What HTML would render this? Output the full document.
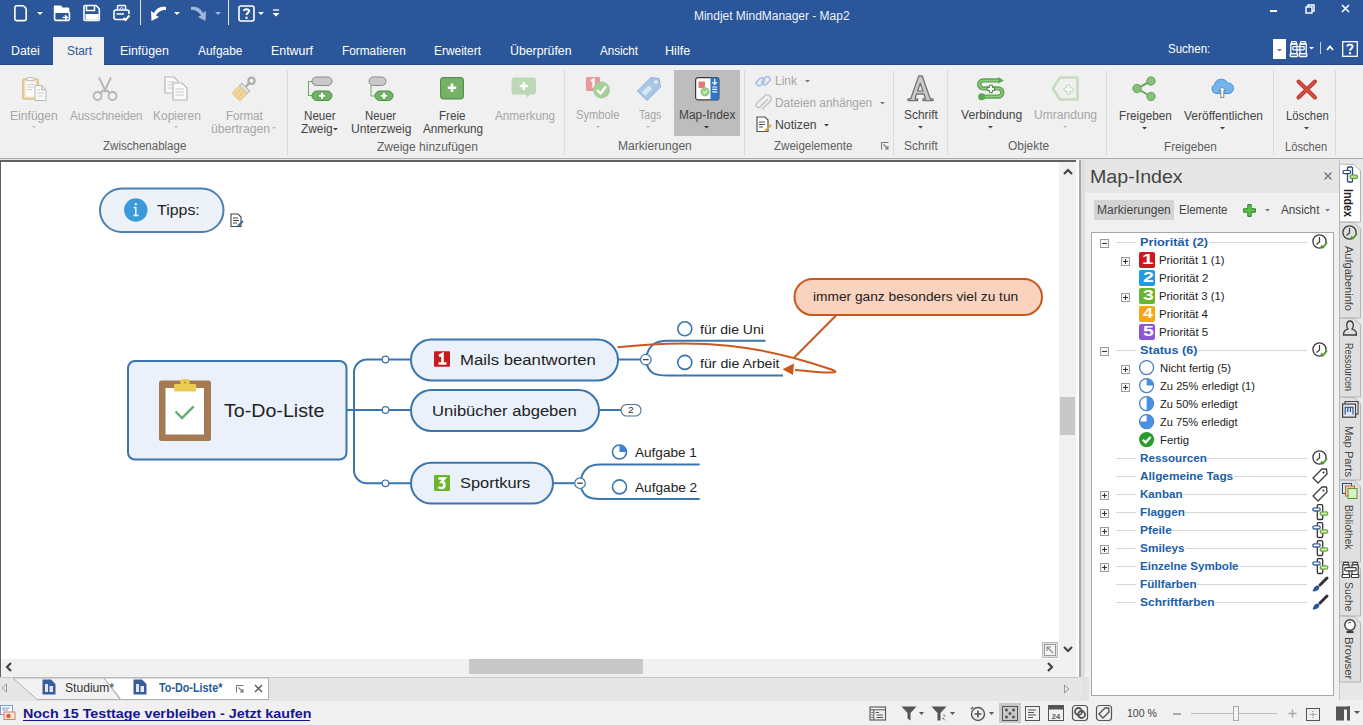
<!DOCTYPE html><html><head><meta charset="utf-8"><style>
html,body{margin:0;padding:0;width:1363px;height:725px;overflow:hidden;background:#f0f0f0;}
body{position:relative;font-family:"Liberation Sans",sans-serif;}
.t{position:absolute;white-space:nowrap;line-height:1;transform-origin:0 0;}
svg{overflow:visible}
</style></head><body>
<div style="position:absolute;left:0px;top:0px;width:1363px;height:65px;background:#2b579a"></div>
<svg style="position:absolute;left:14px;top:5px;" width="14" height="17" viewBox="0 0 14 17"><path d="M2.5 0.8 H8.5 C10 0.8 12.2 3 12.2 4.6 V14 A1.6 1.6 0 0 1 10.6 15.6 H2.5 A1.6 1.6 0 0 1 0.9 14 V2.4 A1.6 1.6 0 0 1 2.5 0.8 Z" fill="none" stroke="#fff" stroke-width="1.6"/></svg>
<svg style="position:absolute;left:36.5px;top:11.5px;" width="6" height="3" viewBox="0 0 6 3"><path d="M0 0 H6 L3 3 Z" fill="#fff"/></svg>
<svg style="position:absolute;left:53px;top:4px;" width="18" height="18" viewBox="0 0 18 18"><path d="M1.7 1.5 H8 L9.5 3.5 H15 A1.3 1.3 0 0 1 16.3 4.8 V9 H0.8 V2.5 A1 1 0 0 1 1.7 1.5 Z" fill="#fff"/><rect x="1.6" y="8" width="14.8" height="8.4" rx="1.3" fill="none" stroke="#fff" stroke-width="1.6"/><path d="M9.5 13.4 H14 M12 11.3 L14.2 13.4 L12 15.5" stroke="#fff" stroke-width="1.4" fill="none"/></svg>
<svg style="position:absolute;left:83px;top:4px;" width="18" height="18" viewBox="0 0 18 18"><path d="M2 1.5 H13 L16.3 4.8 V15.5 A1 1 0 0 1 15.3 16.5 H2 A1 1 0 0 1 1 15.5 V2.5 A1 1 0 0 1 2 1.5 Z" fill="none" stroke="#fff" stroke-width="1.6"/><path d="M3.5 1.5 V6.5 H11.5 V1.5" fill="none" stroke="#fff" stroke-width="1.5"/><rect x="2.5" y="10" width="13" height="5.8" fill="#fff"/></svg>
<svg style="position:absolute;left:113px;top:4px;" width="18" height="18" viewBox="0 0 18 18"><path d="M4.5 6 V2.6 A1.1 1.1 0 0 1 5.6 1.5 H11.4 A1.1 1.1 0 0 1 12.5 2.6 V6" fill="none" stroke="#fff" stroke-width="1.5"/><path d="M6.5 5 L8.5 3.5 L10.5 5" stroke="#fff" stroke-width="1" fill="none"/><path d="M13 15.5 H3 A2 2 0 0 1 1 13.5 V8 A2 2 0 0 1 3 6 H14 A2 2 0 0 1 16 8 V10" fill="none" stroke="#fff" stroke-width="1.6"/><path d="M3.5 10 H11" stroke="#fff" stroke-width="1.5"/><path d="M10.5 14 L12.5 16 L16.5 11.5" stroke="#fff" stroke-width="1.9" fill="none"/></svg>
<div style="position:absolute;left:140px;top:0px;width:1px;height:25px;background:#dfe6f1"></div>
<svg style="position:absolute;left:150px;top:5px;" width="17" height="17" viewBox="0 0 17 17"><path d="M16 2 C10 1 6 4 4 8 L1 6 L1.5 16 L9 12 L6 10.5 C8 7 11 5 16 5 Z" fill="#fff"/></svg>
<svg style="position:absolute;left:173.5px;top:11.5px;" width="6" height="3" viewBox="0 0 6 3"><path d="M0 0 H6 L3 3 Z" fill="#fff"/></svg>
<svg style="position:absolute;left:190px;top:5px;" width="17" height="17" viewBox="0 0 17 17"><path d="M1 2 C7 1 11 4 13 8 L16 6 L15.5 16 L8 12 L11 10.5 C9 7 6 5 1 5 Z" fill="#9fb5d9"/></svg>
<svg style="position:absolute;left:214.5px;top:11.5px;" width="6" height="3" viewBox="0 0 6 3"><path d="M0 0 H6 L3 3 Z" fill="#9fb5d9"/></svg>
<div style="position:absolute;left:228px;top:0px;width:1px;height:25px;background:#dfe6f1"></div>
<svg style="position:absolute;left:238px;top:5px;" width="17" height="17" viewBox="0 0 17 17"><rect x="1" y="1" width="15" height="15" rx="2" fill="none" stroke="#fff" stroke-width="1.6"/><path d="M6 6 C6 3.5 11 3.5 11 6 C11 8 8.5 8 8.5 10" fill="none" stroke="#fff" stroke-width="2"/><rect x="7.4" y="11.8" width="2.2" height="2" fill="#fff"/></svg>
<svg style="position:absolute;left:257.5px;top:11.5px;" width="6" height="3" viewBox="0 0 6 3"><path d="M0 0 H6 L3 3 Z" fill="#fff"/></svg>
<svg style="position:absolute;left:272px;top:9px;" width="8" height="8" viewBox="0 0 8 8"><path d="M1 1 H7" stroke="#fff" stroke-width="1.3"/><path d="M0.5 4 H7.5 L4 7.5 Z" fill="#fff"/></svg>
<div class="t" style="left:694.39px;top:9.80px;font-size:12px;color:#eef2f9;font-weight:normal;transform:scaleX(0.9966);">Mindjet MindManager - Map2</div>
<div style="position:absolute;left:1270px;top:10px;width:7px;height:2px;background:#fff"></div>
<svg style="position:absolute;left:1305px;top:4px;" width="10" height="10" viewBox="0 0 10 10"><rect x="1" y="3" width="6" height="6" fill="none" stroke="#fff" stroke-width="1.4"/><path d="M3 3 V1 H9 V7 H7" fill="none" stroke="#fff" stroke-width="1.4"/></svg>
<svg style="position:absolute;left:1341px;top:4px;" width="9" height="9" viewBox="0 0 9 9"><path d="M1 1 L8 8 M8 1 L1 8" stroke="#fff" stroke-width="1.6"/></svg>
<div style="position:absolute;left:53px;top:37px;width:51px;height:28px;background:#f0f0f0"></div>
<div class="t" style="left:10.86px;top:44.88px;font-size:12.5px;color:#ffffff;font-weight:normal;transform:scaleX(0.9872);">Datei</div>
<div class="t" style="left:67.40px;top:44.88px;font-size:12.5px;color:#2b579a;font-weight:normal;transform:scaleX(0.9515);">Start</div>
<div class="t" style="left:120.36px;top:44.88px;font-size:12.5px;color:#ffffff;font-weight:normal;transform:scaleX(0.9890);">Einfügen</div>
<div class="t" style="left:198.19px;top:44.88px;font-size:12.5px;color:#ffffff;font-weight:normal;transform:scaleX(0.9553);">Aufgabe</div>
<div class="t" style="left:270.85px;top:44.88px;font-size:12.5px;color:#ffffff;font-weight:normal;transform:scaleX(0.9899);">Entwurf</div>
<div class="t" style="left:341.91px;top:44.88px;font-size:12.5px;color:#ffffff;font-weight:normal;transform:scaleX(0.9463);">Formatieren</div>
<div class="t" style="left:434.40px;top:44.88px;font-size:12.5px;color:#ffffff;font-weight:normal;transform:scaleX(0.9531);">Erweitert</div>
<div class="t" style="left:510.33px;top:44.88px;font-size:12.5px;color:#ffffff;font-weight:normal;transform:scaleX(0.9836);">Überprüfen</div>
<div class="t" style="left:600.20px;top:44.88px;font-size:12.5px;color:#ffffff;font-weight:normal;transform:scaleX(0.9272);">Ansicht</div>
<div class="t" style="left:665.33px;top:44.88px;font-size:12.5px;color:#ffffff;font-weight:normal;transform:scaleX(1.0092);">Hilfe</div>
<div class="t" style="left:1168.39px;top:43.30px;font-size:12px;color:#ffffff;font-weight:normal;transform:scaleX(0.9605);">Suchen:</div>
<div style="position:absolute;left:1273px;top:39px;width:13px;height:20px;background:#fff"></div>
<svg style="position:absolute;left:1277.0px;top:48.5px;" width="5.0" height="2.5" viewBox="0 0 5.0 2.5"><path d="M0 0 H5.0 L2.5 2.5 Z" fill="#777"/></svg>
<svg style="position:absolute;left:1289px;top:40px;" width="19" height="18" viewBox="0 0 19 18"><g fill="none" stroke="#fff" stroke-width="1.3"><rect x="2.5" y="1.6" width="4.8" height="2.4" rx="0.8"/><rect x="1.8" y="4" width="6.2" height="9.6"/><rect x="1.2" y="13.6" width="7.4" height="2.9" rx="0.8"/><rect x="11.7" y="1.6" width="4.8" height="2.4" rx="0.8"/><rect x="11" y="4" width="6.2" height="9.6"/><rect x="10.4" y="13.6" width="7.4" height="2.9" rx="0.8"/><rect x="3.8" y="6.6" width="11.4" height="3.2" rx="0.8"/></g></svg>
<svg style="position:absolute;left:1309.0px;top:47px;" width="5.0" height="2.5" viewBox="0 0 5.0 2.5"><path d="M0 0 H5.0 L2.5 2.5 Z" fill="#fff"/></svg>
<div style="position:absolute;left:1320px;top:42px;width:1px;height:12px;background:#c8d4e8"></div>
<svg style="position:absolute;left:1326px;top:45px;" width="8" height="6" viewBox="0 0 8 6"><path d="M1 5 L4 1.5 L7 5" fill="none" stroke="#fff" stroke-width="1.8"/></svg>
<svg style="position:absolute;left:1342px;top:41px;" width="16" height="16" viewBox="0 0 16 16"><rect x="0.7" y="0.7" width="14.6" height="14.6" fill="none" stroke="#fff" stroke-width="1.3"/><path d="M5.2 5.5 C5.2 3 10.6 3 10.6 5.5 C10.6 7.5 8 7.5 8 9.8" fill="none" stroke="#fff" stroke-width="1.9"/><rect x="6.9" y="11.2" width="2.2" height="2" fill="#fff"/></svg>
<div style="position:absolute;left:0px;top:65px;width:1363px;height:93px;background:#f0f0f0"></div>
<div style="position:absolute;left:0px;top:64px;width:53px;height:1px;background:#24497f"></div>
<div style="position:absolute;left:104px;top:64px;width:1259px;height:1px;background:#24497f"></div>
<div style="position:absolute;left:0px;top:65px;width:53px;height:3px;background:#edf1f7"></div>
<div style="position:absolute;left:104px;top:65px;width:1259px;height:3px;background:#edf1f7"></div>
<div style="position:absolute;left:0px;top:158px;width:1363px;height:1px;background:#ababab"></div>
<div style="position:absolute;left:0px;top:159px;width:1363px;height:1px;background:#e6e6e6"></div>
<div style="position:absolute;left:287px;top:70px;width:1px;height:85px;background:#dcdcdc"></div>
<div style="position:absolute;left:564px;top:70px;width:1px;height:85px;background:#dcdcdc"></div>
<div style="position:absolute;left:744px;top:70px;width:1px;height:85px;background:#dcdcdc"></div>
<div style="position:absolute;left:893px;top:70px;width:1px;height:85px;background:#dcdcdc"></div>
<div style="position:absolute;left:947px;top:70px;width:1px;height:85px;background:#dcdcdc"></div>
<div style="position:absolute;left:1106px;top:70px;width:1px;height:85px;background:#dcdcdc"></div>
<div style="position:absolute;left:1273px;top:70px;width:1px;height:85px;background:#dcdcdc"></div>
<div style="position:absolute;left:1335px;top:70px;width:1px;height:85px;background:#dcdcdc"></div>
<svg style="position:absolute;left:22px;top:77px;" width="25" height="24" viewBox="0 0 25 24"><rect x="1" y="2" width="15" height="20" rx="1.8" fill="#efdcb4" stroke="#dcc08f" stroke-width="1.6"/><rect x="3.3" y="4.3" width="10.4" height="15.5" fill="#fbfbfb"/><rect x="5" y="0.5" width="7" height="3.2" rx="1" fill="#f4f4f4" stroke="#bdbdbd" stroke-width="1"/><path d="M5 7.5 H12 M5 10 H12 M5 12.5 H10" stroke="#c8c8c8" stroke-width="0.9"/><path d="M13 8.5 H20 L24 12.5 V23.5 H13 Z" fill="#fbfbfb" stroke="#b8b8b8" stroke-width="1"/><path d="M19.5 8.5 V13 H24" fill="#d8d8d8" stroke="#b8b8b8" stroke-width="0.8"/><path d="M15 13 H18 M15 16 H22 M16 19 H21" stroke="#c4c4c4" stroke-width="0.9"/></svg>
<div class="t" style="left:10.37px;top:109.50px;font-size:12px;color:#a6a6a6;font-weight:normal;transform:scaleX(1.0098);">Einfügen</div>
<svg style="position:absolute;left:31.5px;top:125.5px;" width="4" height="2" viewBox="0 0 4 2"><path d="M0 0 H4 L2 2 Z" fill="#b8b8b8"/></svg>
<svg style="position:absolute;left:92px;top:77px;" width="26" height="24" viewBox="0 0 26 24"><path d="M7 0.5 L14 15 M19 0.5 L12 15" stroke="#b4b4b4" stroke-width="1.8" fill="none"/><circle cx="5.5" cy="19" r="4" fill="none" stroke="#b4b4b4" stroke-width="1.8"/><circle cx="20.5" cy="19" r="4" fill="none" stroke="#b4b4b4" stroke-width="1.8"/><path d="M8.5 16 L11.5 13 M17.5 16 L14.5 13" stroke="#b4b4b4" stroke-width="1.8"/></svg>
<div class="t" style="left:69.69px;top:109.50px;font-size:12px;color:#a6a6a6;font-weight:normal;transform:scaleX(0.9617);">Ausschneiden</div>
<svg style="position:absolute;left:164px;top:76px;" width="25" height="25" viewBox="0 0 25 25"><path d="M1 1 H10 L14 5 V17 H1 Z" fill="#fafafa" stroke="#b8b8b8" stroke-width="1.2"/><path d="M3.5 6 H11 M3.5 9 H11 M3.5 12 H11" stroke="#c4c4c4" stroke-width="0.9"/><path d="M9 7 H18 L23 12 V24 H9 Z" fill="#fafafa" stroke="#b8b8b8" stroke-width="1.2"/><path d="M11.5 13 H20 M11.5 16 H20 M11.5 19 H20" stroke="#c4c4c4" stroke-width="0.9"/></svg>
<div class="t" style="left:152.85px;top:109.50px;font-size:12px;color:#a6a6a6;font-weight:normal;transform:scaleX(0.9973);">Kopieren</div>
<svg style="position:absolute;left:173.5px;top:125.5px;" width="4" height="2" viewBox="0 0 4 2"><path d="M0 0 H4 L2 2 Z" fill="#b8b8b8"/></svg>
<svg style="position:absolute;left:230px;top:75px;" width="27" height="27" viewBox="0 0 27 27"><circle cx="21.5" cy="5.8" r="3.2" fill="none" stroke="#ababab" stroke-width="2.2"/><path d="M19.2 8.2 L15.5 12" stroke="#ababab" stroke-width="2.4"/><g transform="rotate(45 10.5 17.5)"><rect x="5" y="10" width="11" height="3.5" fill="#e6e6e6" stroke="#b4b4b4" stroke-width="1"/><rect x="5" y="13.5" width="11" height="10.5" rx="1.5" fill="#f2d6a2" stroke="#e3c68e" stroke-width="1"/><path d="M8.5 15 V23 M12.5 15 V23" stroke="#e6bf7a" stroke-width="1"/></g></svg>
<div class="t" style="left:226.42px;top:109.50px;font-size:12px;color:#a6a6a6;font-weight:normal;transform:scaleX(0.9667);">Format</div>
<div class="t" style="left:210.72px;top:122.70px;font-size:12px;color:#a6a6a6;font-weight:normal;transform:scaleX(1.0176);">übertragen</div>
<svg style="position:absolute;left:272px;top:126.5px;" width="4" height="2" viewBox="0 0 4 2"><path d="M0 0 H4 L2 2 Z" fill="#b8b8b8"/></svg>
<div class="t" style="left:102.60px;top:140.30px;font-size:12px;color:#5e5e5e;font-weight:normal;transform:scaleX(0.9612);">Zwischenablage</div>
<svg style="position:absolute;left:306px;top:76px;" width="28" height="26" viewBox="0 0 28 26"><rect x="6" y="1" width="20" height="8.5" rx="4.25" fill="#c9c9c9" stroke="#8a8a8a" stroke-width="1"/><path d="M6 5.5 H2.5 V19.5 H6" fill="none" stroke="#6faa64" stroke-width="1.1"/><rect x="6" y="15" width="20" height="9.5" rx="4.75" fill="#70b366" stroke="#4e8d45" stroke-width="1"/><path d="M14.6 16.2 H17.4 V18.4 H19.6 V21.1 H17.4 V23.3 H14.6 V21.1 H12.4 V18.4 H14.6 Z" fill="#fff" stroke="#4e8d45" stroke-width="0.6"/></svg>
<div class="t" style="left:304.42px;top:109.80px;font-size:12px;color:#444444;font-weight:normal;transform:scaleX(0.9687);">Neuer</div>
<div class="t" style="left:300.59px;top:122.80px;font-size:12px;color:#444444;font-weight:normal;transform:scaleX(0.9890);">Zweig</div>
<svg style="position:absolute;left:333.0px;top:127.5px;" width="5.0" height="2.5" viewBox="0 0 5.0 2.5"><path d="M0 0 H5.0 L2.5 2.5 Z" fill="#444"/></svg>
<svg style="position:absolute;left:366px;top:76px;" width="28" height="26" viewBox="0 0 28 26"><rect x="3" y="1" width="17" height="8.5" rx="4.25" fill="#c9c9c9" stroke="#8a8a8a" stroke-width="1"/><path d="M5 9.5 V20 H9" fill="none" stroke="#6faa64" stroke-width="1"/><rect x="9" y="15" width="18" height="9.5" rx="4.75" fill="#70b366" stroke="#4e8d45" stroke-width="1"/><path d="M16.6 16.2 H19.4 V18.4 H21.6 V21.1 H19.4 V23.3 H16.6 V21.1 H14.4 V18.4 H16.6 Z" fill="#fff" stroke="#4e8d45" stroke-width="0.6"/></svg>
<div class="t" style="left:365.44px;top:109.80px;font-size:12px;color:#444444;font-weight:normal;transform:scaleX(0.9528);">Neuer</div>
<div class="t" style="left:351.29px;top:122.80px;font-size:12px;color:#444444;font-weight:normal;transform:scaleX(1.0076);">Unterzweig</div>
<svg style="position:absolute;left:440px;top:77px;" width="24" height="23" viewBox="0 0 24 23"><rect x="0.6" y="0.6" width="22.8" height="21.3" rx="3.2" fill="#74b268" stroke="#568f4c" stroke-width="1.2"/><path d="M12 6.5 V15 M7.75 10.75 H16.25" stroke="#fff" stroke-width="2.6"/></svg>
<div class="t" style="left:438.91px;top:109.80px;font-size:12px;color:#444444;font-weight:normal;transform:scaleX(0.9712);">Freie</div>
<div class="t" style="left:423.19px;top:122.80px;font-size:12px;color:#444444;font-weight:normal;transform:scaleX(0.9777);">Anmerkung</div>
<svg style="position:absolute;left:511px;top:77px;" width="26" height="23" viewBox="0 0 26 23"><path d="M3 0.5 H22 A3 3 0 0 1 25 3.5 V14.5 A3 3 0 0 1 22 17.5 H19 L16.5 20.5 L15 17.5 H3 A3 3 0 0 1 0.5 14.5 V3.5 A3 3 0 0 1 3 0.5 Z" fill="#bcd8b6"/><path d="M12.75 5 V13 M8.75 9 H16.75" stroke="#fff" stroke-width="2.4"/></svg>
<div class="t" style="left:495.19px;top:109.80px;font-size:12px;color:#a6a6a6;font-weight:normal;transform:scaleX(0.9777);">Anmerkung</div>
<div class="t" style="left:376.58px;top:140.50px;font-size:12px;color:#5e5e5e;font-weight:normal;transform:scaleX(1.0015);">Zweige hinzufügen</div>
<div style="position:absolute;left:674px;top:70px;width:66px;height:66px;background:#bdbdbd"></div>
<svg style="position:absolute;left:585px;top:76px;" width="20" height="25" viewBox="0 0 20 25"><rect x="1" y="1" width="14" height="14" fill="#e69a9a"/><path d="M6 5 L8.5 3.5 V12" stroke="#fff" stroke-width="2.2" fill="none"/><circle cx="16.5" cy="14" r="8.5" fill="#a6d09a"/><path d="M12 14 L15.5 17.5 L21 10.5" stroke="#fff" stroke-width="2.2" fill="none"/></svg>
<div class="t" style="left:576.42px;top:109.40px;font-size:12px;color:#a6a6a6;font-weight:normal;transform:scaleX(0.9315);">Symbole</div>
<svg style="position:absolute;left:595.5px;top:125.5px;" width="4" height="2" viewBox="0 0 4 2"><path d="M0 0 H4 L2 2 Z" fill="#b8b8b8"/></svg>
<svg style="position:absolute;left:636px;top:77px;" width="26" height="25" viewBox="0 0 26 25"><path d="M23 1.5 L24.5 10 L11 23.5 L1.5 14 L15 0.5 Z" fill="#a9c6e6" stroke="#8ab0dc" stroke-width="1"/><circle cx="20" cy="5" r="1.8" fill="#f0f0f0"/><rect x="6" y="11" width="10" height="5" transform="rotate(-45 11 13.5)" fill="#d9e6f4"/></svg>
<div class="t" style="left:639.21px;top:109.40px;font-size:12px;color:#a6a6a6;font-weight:normal;transform:scaleX(0.8809);">Tags</div>
<svg style="position:absolute;left:646px;top:125.5px;" width="4" height="2" viewBox="0 0 4 2"><path d="M0 0 H4 L2 2 Z" fill="#b8b8b8"/></svg>
<svg style="position:absolute;left:695px;top:77px;" width="25" height="24" viewBox="0 0 25 24"><rect x="0.6" y="0.6" width="23.3" height="22.3" rx="2.5" fill="#fff" stroke="#3a3a3a" stroke-width="1.2"/><path d="M15.5 0.6 H21.4 A2.5 2.5 0 0 1 23.9 3.1 V20.4 A2.5 2.5 0 0 1 21.4 22.9 H15.5 Z" fill="#2f74c6"/><rect x="3.5" y="4.5" width="6.5" height="6.5" rx="0.6" fill="#e27a7a"/><circle cx="10" cy="14.8" r="4.6" fill="#96cc85"/><path d="M8 14.8 L9.6 16.4 L12.2 13.2" stroke="#e6f4e0" stroke-width="1.2" fill="none"/><path d="M19.7 2 V7.5 M17.4 5.2 L19.7 7.5 L22 5.2 M17.3 10 H22.1 M17.3 12.4 H22.1 M17.3 14.8 H22.1" stroke="#fff" stroke-width="1.2" fill="none"/></svg>
<div class="t" style="left:679.39px;top:109.40px;font-size:12px;color:#444444;font-weight:normal;transform:scaleX(0.9948);">Map-Index</div>
<svg style="position:absolute;left:704.0px;top:126px;" width="5.0" height="2.5" viewBox="0 0 5.0 2.5"><path d="M0 0 H5.0 L2.5 2.5 Z" fill="#333"/></svg>
<div class="t" style="left:618.38px;top:140.20px;font-size:12px;color:#5e5e5e;font-weight:normal;transform:scaleX(1.0062);">Markierungen</div>
<svg style="position:absolute;left:755px;top:74px;" width="17" height="15" viewBox="0 0 17 15"><rect x="1" y="5" width="9" height="5.5" rx="2.75" transform="rotate(-45 5.5 7.75)" fill="none" stroke="#a8c4e6" stroke-width="1.8"/><rect x="6.5" y="4" width="9" height="5.5" rx="2.75" transform="rotate(-45 11 6.75)" fill="none" stroke="#a8c4e6" stroke-width="1.8"/></svg>
<div class="t" style="left:774.89px;top:75.10px;font-size:12px;color:#a6a6a6;font-weight:normal;transform:scaleX(0.9969);">Link</div>
<svg style="position:absolute;left:805.0px;top:79.5px;" width="5.0" height="2.5" viewBox="0 0 5.0 2.5"><path d="M0 0 H5.0 L2.5 2.5 Z" fill="#777"/></svg>
<svg style="position:absolute;left:755px;top:95px;" width="17" height="16" viewBox="0 0 17 16"><path d="M13 4 L5 12 A2.5 2.5 0 0 1 1.5 8.5 L10 0.5 A4 4 0 0 1 15.5 6 L7 14.5" fill="none" stroke="#c6c6c6" stroke-width="1.6"/></svg>
<div class="t" style="left:774.89px;top:97.00px;font-size:12px;color:#a6a6a6;font-weight:normal;transform:scaleX(0.9911);">Dateien anhängen</div>
<svg style="position:absolute;left:879.5px;top:101.5px;" width="5.0" height="2.5" viewBox="0 0 5.0 2.5"><path d="M0 0 H5.0 L2.5 2.5 Z" fill="#777"/></svg>
<svg style="position:absolute;left:756px;top:116px;" width="17" height="17" viewBox="0 0 17 17"><path d="M1 1 H9 L12 4 V15.5 H1 Z" fill="#fff" stroke="#555" stroke-width="1.2"/><path d="M3 6 H9 M3 8.5 H9 M3 11 H7" stroke="#555" stroke-width="1"/><path d="M9 15 L15 9" stroke="#e0a030" stroke-width="2"/></svg>
<div class="t" style="left:774.86px;top:118.90px;font-size:12px;color:#444444;font-weight:normal;transform:scaleX(1.0221);">Notizen</div>
<svg style="position:absolute;left:823.5px;top:123.5px;" width="5.0" height="2.5" viewBox="0 0 5.0 2.5"><path d="M0 0 H5.0 L2.5 2.5 Z" fill="#444"/></svg>
<div class="t" style="left:773.60px;top:140.10px;font-size:12px;color:#5e5e5e;font-weight:normal;transform:scaleX(0.9634);">Zweigelemente</div>
<svg style="position:absolute;left:881px;top:142px;" width="8" height="8" viewBox="0 0 8 8"><path d="M0.5 0.5 H7.5 M0.5 0.5 V7.5" stroke="#777" stroke-width="1"/><path d="M2.5 2.5 L7 7 M4 7 H7 V4" stroke="#777" stroke-width="1.1" fill="none"/></svg>
<svg style="position:absolute;left:907px;top:75px;" width="27" height="27" viewBox="0 0 27 27"><path d="M11.8 1 H15.2 L23.3 24 H26 V25.6 H16 V24 H18.6 L16.9 19 H9.6 L7.9 24 H10.6 V25.6 H1 V24 H3.6 Z M10.6 16.2 H15.9 L13.3 8.2 Z" fill="#cacaca" fill-rule="evenodd" stroke="#757575" stroke-width="1.3" stroke-linejoin="round"/></svg>
<div class="t" style="left:904.35px;top:109.40px;font-size:12px;color:#444444;font-weight:normal;transform:scaleX(0.9945);">Schrift</div>
<svg style="position:absolute;left:918.0px;top:126px;" width="5.0" height="2.5" viewBox="0 0 5.0 2.5"><path d="M0 0 H5.0 L2.5 2.5 Z" fill="#444"/></svg>
<div class="t" style="left:904.35px;top:140.10px;font-size:12px;color:#5e5e5e;font-weight:normal;transform:scaleX(0.9945);">Schrift</div>
<svg style="position:absolute;left:976px;top:75px;" width="30" height="27" viewBox="0 0 30 27"><path d="M23 5.4 H7.2 A4 4 0 0 0 7.2 13.4 H22.2 A4.1 4.1 0 0 1 22.2 21.6 H5.6" fill="none" stroke="#5fa554" stroke-width="4.4"/><path d="M23 5.4 H7.2 A4 4 0 0 0 7.2 13.4 H22.2 A4.1 4.1 0 0 1 22.2 21.6 H5.6" fill="none" stroke="#93ca86" stroke-width="1.5"/><path d="M22.3 2 L27.9 5.4 L22.3 8.8 Z" fill="#5fa554"/><circle cx="5.6" cy="21.7" r="3.5" fill="#5fa554"/><path d="M13.4 10.2 H16.4 V12.6 H18.6 V15.4 H16.4 V17.6 H13.4 V15.4 H11.1 V12.6 H13.4 Z" fill="#fbfff8" stroke="#4d7a45" stroke-width="1"/></svg>
<div class="t" style="left:961.17px;top:109.40px;font-size:12px;color:#444444;font-weight:normal;transform:scaleX(1.0082);">Verbindung</div>
<svg style="position:absolute;left:988.0px;top:126px;" width="5.0" height="2.5" viewBox="0 0 5.0 2.5"><path d="M0 0 H5.0 L2.5 2.5 Z" fill="#444"/></svg>
<svg style="position:absolute;left:1051px;top:76px;" width="29" height="25" viewBox="0 0 29 25"><path d="M9 1.5 H26.5 V23.5 H9 L1.8 12.5 Z" fill="none" stroke="#c5ddbd" stroke-width="2.6" stroke-linejoin="round"/><path d="M16 9 H19 V12 H22 V15 H19 V18 H16 V15 H13 V12 H16 Z" fill="#fff" stroke="#bdd6b4" stroke-width="1"/></svg>
<div class="t" style="left:1034.30px;top:109.40px;font-size:12px;color:#a6a6a6;font-weight:normal;transform:scaleX(1.0059);">Umrandung</div>
<svg style="position:absolute;left:1062.5px;top:126px;" width="4" height="2" viewBox="0 0 4 2"><path d="M0 0 H4 L2 2 Z" fill="#b8b8b8"/></svg>
<div class="t" style="left:1007.90px;top:140.10px;font-size:12px;color:#5e5e5e;font-weight:normal;transform:scaleX(0.9938);">Objekte</div>
<svg style="position:absolute;left:1132px;top:76px;" width="25" height="26" viewBox="0 0 25 26"><path d="M19 5 L5 12.5 L19 20.5" fill="none" stroke="#6aa35f" stroke-width="2"/><circle cx="19" cy="5" r="4.2" fill="#86c07a" stroke="#6aa35f" stroke-width="1"/><circle cx="5" cy="12.5" r="4.2" fill="#86c07a" stroke="#6aa35f" stroke-width="1"/><circle cx="19" cy="20.5" r="4.2" fill="#86c07a" stroke="#6aa35f" stroke-width="1"/></svg>
<div class="t" style="left:1119.41px;top:110.00px;font-size:12px;color:#444444;font-weight:normal;transform:scaleX(0.9778);">Freigeben</div>
<svg style="position:absolute;left:1142.0px;top:126.5px;" width="5.0" height="2.5" viewBox="0 0 5.0 2.5"><path d="M0 0 H5.0 L2.5 2.5 Z" fill="#444"/></svg>
<svg style="position:absolute;left:1211px;top:78px;" width="23" height="22" viewBox="0 0 23 22"><path d="M5 15.5 A4.8 4.8 0 0 1 3.5 6.5 A7 7 0 0 1 16.5 5 A5.3 5.3 0 0 1 18 15.5 Z" fill="#74b3ec" stroke="#4d8fd0" stroke-width="1"/><path d="M11.3 9 L7.8 12.5 H9.8 V19.5 H12.8 V12.5 H14.8 Z" fill="#fff" stroke="#5a6e80" stroke-width="0.8"/></svg>
<div class="t" style="left:1184.18px;top:110.00px;font-size:12px;color:#444444;font-weight:normal;transform:scaleX(0.9981);">Veröffentlichen</div>
<svg style="position:absolute;left:1220.0px;top:126.5px;" width="5.0" height="2.5" viewBox="0 0 5.0 2.5"><path d="M0 0 H5.0 L2.5 2.5 Z" fill="#444"/></svg>
<div class="t" style="left:1164.41px;top:140.80px;font-size:12px;color:#5e5e5e;font-weight:normal;transform:scaleX(0.9778);">Freigeben</div>
<svg style="position:absolute;left:1296px;top:79px;" width="22" height="21" viewBox="0 0 22 21"><path d="M2.5 2.5 L19 18.5 M19 2.5 L2.5 18.5" stroke="#b8352e" stroke-width="4" stroke-linecap="round"/><path d="M2.5 2.5 L19 18.5 M19 2.5 L2.5 18.5" stroke="#dc4a3c" stroke-width="2.4" stroke-linecap="round"/></svg>
<div class="t" style="left:1286.45px;top:110.00px;font-size:12px;color:#444444;font-weight:normal;transform:scaleX(0.9414);">Löschen</div>
<svg style="position:absolute;left:1304.0px;top:126.5px;" width="5.0" height="2.5" viewBox="0 0 5.0 2.5"><path d="M0 0 H5.0 L2.5 2.5 Z" fill="#444"/></svg>
<div class="t" style="left:1284.96px;top:140.80px;font-size:12px;color:#5e5e5e;font-weight:normal;transform:scaleX(0.9299);">Löschen</div>
<div style="position:absolute;left:0px;top:160px;width:1079px;height:517px;background:#fff"></div>
<div style="position:absolute;left:0px;top:160px;width:1077px;height:2px;background:#626262"></div>
<div style="position:absolute;left:0px;top:160px;width:1px;height:517px;background:#5e5e5e"></div>
<div style="position:absolute;left:1059px;top:162px;width:18px;height:497px;background:#f0f0f0"></div>
<svg style="position:absolute;left:1063px;top:168px;" width="10" height="7" viewBox="0 0 10 7"><path d="M1 6 L5 2 L9 6" fill="none" stroke="#444" stroke-width="2.2"/></svg>
<svg style="position:absolute;left:1063px;top:646px;" width="10" height="7" viewBox="0 0 10 7"><path d="M1 1 L5 5 L9 1" fill="none" stroke="#444" stroke-width="2.2"/></svg>
<div style="position:absolute;left:1060px;top:397px;width:15px;height:38px;background:#c8c8c8"></div>
<svg style="position:absolute;left:1042px;top:642px;" width="16" height="16" viewBox="0 0 16 16"><rect x="0.5" y="0.5" width="15" height="15" fill="#e4e4e4" stroke="#b8b8b8" stroke-width="1"/><rect x="2.5" y="2.5" width="11" height="11" fill="#f4f4f4" stroke="#9a9a9a" stroke-width="1"/><path d="M11 11 L5.5 5.5 M5 9 V5 H9" stroke="#8a8a8a" stroke-width="1.1" fill="none"/></svg>
<div style="position:absolute;left:1px;top:659px;width:1075px;height:18px;background:#f0f0f0"></div>
<svg style="position:absolute;left:5px;top:662px;" width="7" height="10" viewBox="0 0 7 10"><path d="M6 1 L2 5 L6 9" fill="none" stroke="#444" stroke-width="2.2"/></svg>
<svg style="position:absolute;left:1047px;top:662px;" width="7" height="10" viewBox="0 0 7 10"><path d="M1 1 L5 5 L1 9" fill="none" stroke="#444" stroke-width="2.2"/></svg>
<div style="position:absolute;left:469px;top:659px;width:174px;height:15px;background:#c8c8c8"></div>
<div style="position:absolute;left:1076px;top:160px;width:3px;height:517px;background:#fbfbfb"></div>
<div style="position:absolute;left:1079px;top:160px;width:2px;height:517px;background:#a8a8a8"></div>
<svg style="position:absolute;left:0;top:0" width="1363" height="725"><rect x="100" y="188.5" width="123.5" height="43.5" rx="21.75" fill="#edf2f8" stroke="#4b80b0" stroke-width="2"/><circle cx="135.8" cy="210" r="11.7" fill="#3d9ad9"/><path d="M135.8 207 V215.5 M133.5 215.5 H138.5 M133.6 207.5 H136" stroke="#fff" stroke-width="1.4" fill="none"/><rect x="134.9" y="203.2" width="1.9" height="1.9" fill="#fff"/><rect x="128" y="361" width="218.5" height="98.5" rx="7" fill="#eaf1fa" stroke="#3b75ae" stroke-width="2"/><rect x="159" y="380.5" width="52" height="60.5" rx="2.5" fill="#a47a53"/><rect x="165.5" y="388" width="38.5" height="46.5" fill="#fff"/><rect x="174" y="384" width="22.2" height="7.4" rx="1.2" fill="#eccb52"/><path d="M180.4 384.5 V381 A2 2 0 0 1 182.4 379 H187.5 A2 2 0 0 1 189.5 381 V384.5 Z" fill="#eccb52"/><circle cx="185" cy="382.5" r="0.9" fill="#a88a2a"/><path d="M175.5 411.5 L182 418 L193.7 406.3" fill="none" stroke="#67ad72" stroke-width="2.4"/><path d="M346.5 410 H410" stroke="#3b75ae" stroke-width="2" fill="none"/><path d="M410 359.5 H367 A13 13 0 0 0 354 372.5 V470.3 A13 13 0 0 0 367 483.3 H410" stroke="#3b75ae" stroke-width="2" fill="none"/><circle cx="385.5" cy="359.5" r="3.3" fill="#fff" stroke="#3b75ae" stroke-width="1.2"/><circle cx="385.5" cy="410" r="3.3" fill="#fff" stroke="#3b75ae" stroke-width="1.2"/><circle cx="385.5" cy="483.3" r="3.3" fill="#fff" stroke="#3b75ae" stroke-width="1.2"/><rect x="411" y="339.5" width="207" height="41" rx="20.5" fill="#eaf1fa" stroke="#3b75ae" stroke-width="2"/><rect x="411" y="390" width="188" height="41" rx="20.5" fill="#eaf1fa" stroke="#3b75ae" stroke-width="2"/><rect x="411" y="462.8" width="142" height="40.8" rx="20.4" fill="#eaf1fa" stroke="#3b75ae" stroke-width="2"/><rect x="434" y="351.3" width="16" height="15.5" rx="1" fill="#c81b1b"/><path d="M439 356 L442.5 354 V363.5 M438.5 363.5 H446.5" stroke="#fff" stroke-width="2.6" fill="none"/><rect x="434" y="475" width="16" height="16" rx="1" fill="#6fb52c"/><path d="M438.5 478.5 H444.5 L441.5 482 C445.5 482 445.5 488 441.5 488 C440 488 439 487.5 438.5 487" stroke="#fff" stroke-width="2.4" fill="none"/><path d="M618 359.5 H640" stroke="#3b75ae" stroke-width="2"/><path d="M645.8 359.5 C648 345 655 340.7 668 340.7 H765.5" stroke="#3b75ae" stroke-width="2" fill="none"/><path d="M645.8 359.5 C648 374 655 375.6 668 375.6 H783" stroke="#3b75ae" stroke-width="2" fill="none"/><circle cx="645.8" cy="359.6" r="5.3" fill="#fff" stroke="#3b75ae" stroke-width="1.2"/><path d="M643 359.6 H648.6" stroke="#444" stroke-width="1.3"/><circle cx="684.8" cy="328.8" r="7" fill="#fff" stroke="#3b75ae" stroke-width="1.6"/><circle cx="684.8" cy="362.4" r="7" fill="#fff" stroke="#3b75ae" stroke-width="1.6"/><path d="M599 410 H621" stroke="#3b75ae" stroke-width="2"/><rect x="621" y="404.5" width="20" height="11.5" rx="5.75" fill="#fff" stroke="#4f7293" stroke-width="1.1"/><path d="M553.5 483.2 H575" stroke="#3b75ae" stroke-width="2"/><path d="M580 483.2 C582 470 588 464.6 600 464.6 H699.7" stroke="#3b75ae" stroke-width="2" fill="none"/><path d="M580 483.2 C582 496 588 499 600 499 H699.7" stroke="#3b75ae" stroke-width="2" fill="none"/><circle cx="580" cy="483.2" r="5.3" fill="#fff" stroke="#3b75ae" stroke-width="1.2"/><path d="M577.2 483.2 H582.8" stroke="#444" stroke-width="1.3"/><circle cx="619.5" cy="452" r="7" fill="#fff" stroke="#3b75ae" stroke-width="1.6"/><path d="M619.5 452 V445 A7 7 0 0 1 626.5 452 Z" fill="#3d7fd9"/><circle cx="619.5" cy="486.9" r="7" fill="#fff" stroke="#3b75ae" stroke-width="1.6"/><path d="M836 315.5 L793.5 358.3" stroke="#c9581f" stroke-width="2"/><rect x="794.5" y="279" width="247.5" height="36" rx="18" fill="#f9d3be" stroke="#c9581f" stroke-width="2"/><path d="M617.5 347.3 C700 338 760 345 830 369 C842 373 835 374 795 370" stroke="#c9581f" stroke-width="2" fill="none"/><path d="M782.5 369.2 L794 363.5 L793 375 Z" fill="#c9581f"/></svg>
<svg style="position:absolute;left:230px;top:213px;" width="14" height="15" viewBox="0 0 14 15"><path d="M1 1 H8 L11 4 V13.5 H1 Z" fill="#fff" stroke="#444" stroke-width="1.1"/><path d="M3 5 H8 M3 7.5 H9 M3 10 H7" stroke="#444" stroke-width="1"/><path d="M8 13 L13 8" stroke="#3a6fb0" stroke-width="2"/></svg>
<div class="t" style="left:157.10px;top:202.32px;font-size:15.5px;color:#222222;font-weight:normal;transform:scaleX(1.0279);">Tipps:</div>
<div class="t" style="left:224.02px;top:400.85px;font-size:19px;color:#222222;font-weight:normal;transform:scaleX(1.0328);">To-Do-Liste</div>
<div class="t" style="left:460.27px;top:352.12px;font-size:15.5px;color:#222222;font-weight:normal;transform:scaleX(1.0794);">Mails beantworten</div>
<div class="t" style="left:431.62px;top:402.62px;font-size:15.5px;color:#222222;font-weight:normal;transform:scaleX(1.0701);">Unibücher abgeben</div>
<div class="t" style="left:459.92px;top:475.22px;font-size:15.5px;color:#222222;font-weight:normal;transform:scaleX(1.0592);">Sportkurs</div>
<div class="t" style="left:699.82px;top:324.38px;font-size:12.5px;color:#222222;font-weight:normal;transform:scaleX(1.1218);">für die Uni</div>
<div class="t" style="left:699.82px;top:358.18px;font-size:12.5px;color:#222222;font-weight:normal;transform:scaleX(1.1329);">für die Arbeit</div>
<div class="t" style="left:634.95px;top:447.38px;font-size:12.5px;color:#222222;font-weight:normal;transform:scaleX(1.0852);">Aufgabe 1</div>
<div class="t" style="left:634.94px;top:482.07px;font-size:12.5px;color:#222222;font-weight:normal;transform:scaleX(1.0909);">Aufgabe 2</div>
<div class="t" style="left:812.75px;top:289.75px;font-size:13px;color:#222222;font-weight:normal;transform:scaleX(1.0556);">immer ganz besonders viel zu tun</div>
<div class="t" style="left:628.37px;top:404.82px;font-size:9.5px;color:#333;font-weight:normal;transform:scaleX(1.0893);">2</div>
<div style="position:absolute;left:1081px;top:160px;width:258px;height:540px;background:#f0f0f0"></div>
<div style="position:absolute;left:1081px;top:160px;width:4px;height:540px;background:#dedede"></div>
<div style="position:absolute;left:1085px;top:160px;width:254px;height:33px;background:#e6e6e6"></div>
<div class="t" style="left:1090.37px;top:167.58px;font-size:18.5px;color:#444444;font-weight:normal;transform:scaleX(1.0603);">Map-Index</div>
<svg style="position:absolute;left:1323px;top:171px;" width="10" height="10" viewBox="0 0 10 10"><path d="M1.5 1.5 L8.5 8.5 M8.5 1.5 L1.5 8.5" stroke="#777" stroke-width="1.5"/></svg>
<div style="position:absolute;left:1094px;top:200px;width:80px;height:20px;background:#d4d4d4"></div>
<div class="t" style="left:1097.38px;top:203.60px;font-size:12px;color:#444;font-weight:normal;transform:scaleX(1.0062);">Markierungen</div>
<div class="t" style="left:1178.93px;top:203.60px;font-size:12px;color:#444;font-weight:normal;transform:scaleX(0.9567);">Elemente</div>
<svg style="position:absolute;left:1243px;top:204px;" width="14" height="13" viewBox="0 0 14 13"><path d="M4.8 0.6 H8.2 V4.8 H12.4 V8.2 H8.2 V12.4 H4.8 V8.2 H0.6 V4.8 H4.8 Z" fill="#5cc24a" stroke="#2f7d2a" stroke-width="1"/></svg>
<svg style="position:absolute;left:1264.5px;top:208.5px;" width="5.0" height="2.5" viewBox="0 0 5.0 2.5"><path d="M0 0 H5.0 L2.5 2.5 Z" fill="#777"/></svg>
<div class="t" style="left:1280.69px;top:203.60px;font-size:12px;color:#444;font-weight:normal;transform:scaleX(0.9754);">Ansicht</div>
<svg style="position:absolute;left:1324.5px;top:208.5px;" width="5.0" height="2.5" viewBox="0 0 5.0 2.5"><path d="M0 0 H5.0 L2.5 2.5 Z" fill="#777"/></svg>
<div style="position:absolute;left:1091px;top:232px;width:243px;height:464px;background:#fff;border:1px solid #a8a8a8;box-sizing:border-box"></div>
<svg style="position:absolute;left:1100px;top:239px;" width="9" height="9" viewBox="0 0 9 9"><rect x="0.5" y="0.5" width="8" height="8" fill="#f7f7f7" stroke="#9c9c9c" stroke-width="1"/><path d="M2 4.5 H7" stroke="#333" stroke-width="1"/></svg>
<div style="position:absolute;left:1116px;top:242px;width:20px;height:1px;background:#d6d6d6"></div>
<div style="position:absolute;left:1209px;top:242px;width:98px;height:1px;background:#d6d6d6"></div>
<div class="t" style="left:1139.65px;top:237.22px;font-size:11.5px;color:#1b5ea8;font-weight:bold;transform:scaleX(1.1086);">Priorität (2)</div>
<svg style="position:absolute;left:1312px;top:234px;" width="16" height="16" viewBox="0 0 16 16"><circle cx="7.5" cy="7.5" r="6.6" fill="#fff" stroke="#3c3c3c" stroke-width="1.3"/><path d="M7.5 3 V8 L4.5 10.5" stroke="#3c3c3c" stroke-width="1.2" fill="none"/><path d="M9 11.5 L11 13.5 L15 8.5" stroke="#4fa030" stroke-width="1.8" fill="none"/></svg>
<svg style="position:absolute;left:1121px;top:257px;" width="9" height="9" viewBox="0 0 9 9"><rect x="0.5" y="0.5" width="8" height="8" fill="#f7f7f7" stroke="#9c9c9c" stroke-width="1"/><path d="M2 4.5 H7" stroke="#333" stroke-width="1"/><path d="M4.5 2 V7" stroke="#333" stroke-width="1"/></svg>
<svg style="position:absolute;left:1139px;top:252px;" width="16" height="16" viewBox="0 0 16 16"><rect x="0" y="0" width="16" height="16" rx="2" fill="#d0161e"/></svg>
<div class="t" style="left:1142.05px;top:252.38px;font-size:14.5px;color:#ffffff;font-weight:bold;transform:scaleX(1.4183);">1</div>
<div class="t" style="left:1159.43px;top:255.22px;font-size:11.5px;color:#222;font-weight:normal;transform:scaleX(0.9855);">Priorität 1 (1)</div>
<svg style="position:absolute;left:1139px;top:270px;" width="16" height="16" viewBox="0 0 16 16"><rect x="0" y="0" width="16" height="16" rx="2" fill="#2299e8"/></svg>
<div class="t" style="left:1142.89px;top:270.38px;font-size:14.5px;color:#ffffff;font-weight:bold;transform:scaleX(1.3339);">2</div>
<div class="t" style="left:1159.41px;top:273.23px;font-size:11.5px;color:#222;font-weight:normal;transform:scaleX(1.0027);">Priorität 2</div>
<svg style="position:absolute;left:1121px;top:293px;" width="9" height="9" viewBox="0 0 9 9"><rect x="0.5" y="0.5" width="8" height="8" fill="#f7f7f7" stroke="#9c9c9c" stroke-width="1"/><path d="M2 4.5 H7" stroke="#333" stroke-width="1"/><path d="M4.5 2 V7" stroke="#333" stroke-width="1"/></svg>
<svg style="position:absolute;left:1139px;top:288px;" width="16" height="16" viewBox="0 0 16 16"><rect x="0" y="0" width="16" height="16" rx="2" fill="#6bb52e"/></svg>
<div class="t" style="left:1142.83px;top:288.38px;font-size:14.5px;color:#ffffff;font-weight:bold;transform:scaleX(1.3421);">3</div>
<div class="t" style="left:1159.43px;top:291.23px;font-size:11.5px;color:#222;font-weight:normal;transform:scaleX(0.9855);">Priorität 3 (1)</div>
<svg style="position:absolute;left:1139px;top:306px;" width="16" height="16" viewBox="0 0 16 16"><rect x="0" y="0" width="16" height="16" rx="2" fill="#f5a712"/></svg>
<div class="t" style="left:1143.25px;top:306.38px;font-size:14.5px;color:#ffffff;font-weight:bold;transform:scaleX(1.2330);">4</div>
<div class="t" style="left:1159.42px;top:309.23px;font-size:11.5px;color:#222;font-weight:normal;transform:scaleX(0.9949);">Priorität 4</div>
<svg style="position:absolute;left:1139px;top:324px;" width="16" height="16" viewBox="0 0 16 16"><rect x="0" y="0" width="16" height="16" rx="2" fill="#8d56d6"/></svg>
<div class="t" style="left:1142.67px;top:324.38px;font-size:14.5px;color:#ffffff;font-weight:bold;transform:scaleX(1.3421);">5</div>
<div class="t" style="left:1159.41px;top:327.23px;font-size:11.5px;color:#222;font-weight:normal;transform:scaleX(0.9988);">Priorität 5</div>
<svg style="position:absolute;left:1100px;top:347px;" width="9" height="9" viewBox="0 0 9 9"><rect x="0.5" y="0.5" width="8" height="8" fill="#f7f7f7" stroke="#9c9c9c" stroke-width="1"/><path d="M2 4.5 H7" stroke="#333" stroke-width="1"/></svg>
<div style="position:absolute;left:1116px;top:350px;width:20px;height:1px;background:#d6d6d6"></div>
<div style="position:absolute;left:1198px;top:350px;width:109px;height:1px;background:#d6d6d6"></div>
<div class="t" style="left:1139.88px;top:345.23px;font-size:11.5px;color:#1b5ea8;font-weight:bold;transform:scaleX(1.0980);">Status (6)</div>
<svg style="position:absolute;left:1312px;top:342px;" width="16" height="16" viewBox="0 0 16 16"><circle cx="7.5" cy="7.5" r="6.6" fill="#fff" stroke="#3c3c3c" stroke-width="1.3"/><path d="M7.5 3 V8 L4.5 10.5" stroke="#3c3c3c" stroke-width="1.2" fill="none"/><path d="M9 11.5 L11 13.5 L15 8.5" stroke="#4fa030" stroke-width="1.8" fill="none"/></svg>
<svg style="position:absolute;left:1121px;top:365px;" width="9" height="9" viewBox="0 0 9 9"><rect x="0.5" y="0.5" width="8" height="8" fill="#f7f7f7" stroke="#9c9c9c" stroke-width="1"/><path d="M2 4.5 H7" stroke="#333" stroke-width="1"/><path d="M4.5 2 V7" stroke="#333" stroke-width="1"/></svg>
<svg style="position:absolute;left:1139px;top:360px;" width="16" height="16" viewBox="0 0 16 16"><circle cx="7.6" cy="7.6" r="7" fill="#fff" stroke="#4a7fc0" stroke-width="1.3"/></svg>
<div class="t" style="left:1159.61px;top:363.23px;font-size:11.5px;color:#222;font-weight:normal;transform:scaleX(0.9830);">Nicht fertig (5)</div>
<svg style="position:absolute;left:1121px;top:383px;" width="9" height="9" viewBox="0 0 9 9"><rect x="0.5" y="0.5" width="8" height="8" fill="#f7f7f7" stroke="#9c9c9c" stroke-width="1"/><path d="M2 4.5 H7" stroke="#333" stroke-width="1"/><path d="M4.5 2 V7" stroke="#333" stroke-width="1"/></svg>
<svg style="position:absolute;left:1139px;top:378px;" width="16" height="16" viewBox="0 0 16 16"><circle cx="7.6" cy="7.6" r="7" fill="#fff" stroke="#4a7fc0" stroke-width="1.3"/><path d="M7.6 7.6 V0.5 A7.1 7.1 0 0 1 14.7 7.6 Z" fill="#4a90e2"/></svg>
<div class="t" style="left:1160.27px;top:381.23px;font-size:11.5px;color:#222;font-weight:normal;transform:scaleX(0.9720);">Zu 25% erledigt (1)</div>
<svg style="position:absolute;left:1139px;top:396px;" width="16" height="16" viewBox="0 0 16 16"><circle cx="7.6" cy="7.6" r="7" fill="#fff" stroke="#4a7fc0" stroke-width="1.3"/><path d="M7.6 7.6 V0.5 A7.1 7.1 0 0 1 7.6 14.7 Z" fill="#4a90e2"/></svg>
<div class="t" style="left:1160.28px;top:399.23px;font-size:11.5px;color:#222;font-weight:normal;transform:scaleX(0.9625);">Zu 50% erledigt</div>
<svg style="position:absolute;left:1139px;top:414px;" width="16" height="16" viewBox="0 0 16 16"><circle cx="7.6" cy="7.6" r="7" fill="#fff" stroke="#4a7fc0" stroke-width="1.3"/><path d="M7.6 7.6 V0.5 A7.1 7.1 0 1 1 0.5 7.6 Z" fill="#4a90e2"/></svg>
<div class="t" style="left:1160.28px;top:417.23px;font-size:11.5px;color:#222;font-weight:normal;transform:scaleX(0.9625);">Zu 75% erledigt</div>
<svg style="position:absolute;left:1139px;top:432px;" width="16" height="16" viewBox="0 0 16 16"><circle cx="7.6" cy="7.6" r="7.6" fill="#2e9a2e"/><path d="M3.8 7.8 L6.6 10.6 L11.6 5" stroke="#fff" stroke-width="2.2" fill="none"/></svg>
<div class="t" style="left:1159.62px;top:435.23px;font-size:11.5px;color:#222;font-weight:normal;transform:scaleX(0.9893);">Fertig</div>
<div style="position:absolute;left:1116px;top:458px;width:20px;height:1px;background:#d6d6d6"></div>
<div style="position:absolute;left:1207px;top:458px;width:100px;height:1px;background:#d6d6d6"></div>
<div class="t" style="left:1139.72px;top:453.23px;font-size:11.5px;color:#1b5ea8;font-weight:bold;transform:scaleX(1.0145);">Ressourcen</div>
<svg style="position:absolute;left:1312px;top:450px;" width="16" height="16" viewBox="0 0 16 16"><circle cx="7.5" cy="7.5" r="6.6" fill="#fff" stroke="#3c3c3c" stroke-width="1.3"/><path d="M7.5 3 V8 L4.5 10.5" stroke="#3c3c3c" stroke-width="1.2" fill="none"/><path d="M9 11.5 L11 13.5 L15 8.5" stroke="#4fa030" stroke-width="1.8" fill="none"/></svg>
<div style="position:absolute;left:1116px;top:476px;width:20px;height:1px;background:#d6d6d6"></div>
<div style="position:absolute;left:1234px;top:476px;width:73px;height:1px;background:#d6d6d6"></div>
<div class="t" style="left:1139.99px;top:471.23px;font-size:11.5px;color:#1b5ea8;font-weight:bold;transform:scaleX(1.0295);">Allgemeine Tags</div>
<svg style="position:absolute;left:1312px;top:468px;" width="16" height="16" viewBox="0 0 16 16"><path d="M14.5 1 L15 6 L6 15 L1 10 L10 1 Z" fill="#fff" stroke="#3c3c3c" stroke-width="1.3" stroke-linejoin="round"/><circle cx="11.5" cy="4.5" r="1.1" fill="#3c3c3c"/></svg>
<svg style="position:absolute;left:1100px;top:491px;" width="9" height="9" viewBox="0 0 9 9"><rect x="0.5" y="0.5" width="8" height="8" fill="#f7f7f7" stroke="#9c9c9c" stroke-width="1"/><path d="M2 4.5 H7" stroke="#333" stroke-width="1"/><path d="M4.5 2 V7" stroke="#333" stroke-width="1"/></svg>
<div style="position:absolute;left:1116px;top:494px;width:20px;height:1px;background:#d6d6d6"></div>
<div style="position:absolute;left:1183px;top:494px;width:124px;height:1px;background:#d6d6d6"></div>
<div class="t" style="left:1139.73px;top:489.23px;font-size:11.5px;color:#1b5ea8;font-weight:bold;transform:scaleX(1.0080);">Kanban</div>
<svg style="position:absolute;left:1312px;top:486px;" width="16" height="16" viewBox="0 0 16 16"><path d="M14.5 1 L15 6 L6 15 L1 10 L10 1 Z" fill="#fff" stroke="#3c3c3c" stroke-width="1.3" stroke-linejoin="round"/><circle cx="11.5" cy="4.5" r="1.1" fill="#3c3c3c"/></svg>
<svg style="position:absolute;left:1100px;top:509px;" width="9" height="9" viewBox="0 0 9 9"><rect x="0.5" y="0.5" width="8" height="8" fill="#f7f7f7" stroke="#9c9c9c" stroke-width="1"/><path d="M2 4.5 H7" stroke="#333" stroke-width="1"/><path d="M4.5 2 V7" stroke="#333" stroke-width="1"/></svg>
<div style="position:absolute;left:1116px;top:512px;width:20px;height:1px;background:#d6d6d6"></div>
<div style="position:absolute;left:1185px;top:512px;width:122px;height:1px;background:#d6d6d6"></div>
<div class="t" style="left:1139.72px;top:507.23px;font-size:11.5px;color:#1b5ea8;font-weight:bold;transform:scaleX(1.0177);">Flaggen</div>
<svg style="position:absolute;left:1312px;top:504px;" width="17" height="17" viewBox="0 0 17 17"><rect x="5.3" y="0.7" width="5.4" height="14.8" rx="1.2" fill="#fff" stroke="#333" stroke-width="1.3"/><rect x="0.8" y="3.8" width="7.4" height="3.2" rx="1.6" fill="#fff" stroke="#3a5f98" stroke-width="1.3"/><rect x="8.2" y="7.8" width="7.6" height="3.4" rx="1.7" fill="#d6ecb8" stroke="#6aa83a" stroke-width="1.3"/></svg>
<svg style="position:absolute;left:1100px;top:527px;" width="9" height="9" viewBox="0 0 9 9"><rect x="0.5" y="0.5" width="8" height="8" fill="#f7f7f7" stroke="#9c9c9c" stroke-width="1"/><path d="M2 4.5 H7" stroke="#333" stroke-width="1"/><path d="M4.5 2 V7" stroke="#333" stroke-width="1"/></svg>
<div style="position:absolute;left:1116px;top:530px;width:20px;height:1px;background:#d6d6d6"></div>
<div style="position:absolute;left:1173px;top:530px;width:134px;height:1px;background:#d6d6d6"></div>
<div class="t" style="left:1139.71px;top:525.23px;font-size:11.5px;color:#1b5ea8;font-weight:bold;transform:scaleX(1.0363);">Pfeile</div>
<svg style="position:absolute;left:1312px;top:522px;" width="17" height="17" viewBox="0 0 17 17"><rect x="5.3" y="0.7" width="5.4" height="14.8" rx="1.2" fill="#fff" stroke="#333" stroke-width="1.3"/><rect x="0.8" y="3.8" width="7.4" height="3.2" rx="1.6" fill="#fff" stroke="#3a5f98" stroke-width="1.3"/><rect x="8.2" y="7.8" width="7.6" height="3.4" rx="1.7" fill="#d6ecb8" stroke="#6aa83a" stroke-width="1.3"/></svg>
<svg style="position:absolute;left:1100px;top:545px;" width="9" height="9" viewBox="0 0 9 9"><rect x="0.5" y="0.5" width="8" height="8" fill="#f7f7f7" stroke="#9c9c9c" stroke-width="1"/><path d="M2 4.5 H7" stroke="#333" stroke-width="1"/><path d="M4.5 2 V7" stroke="#333" stroke-width="1"/></svg>
<div style="position:absolute;left:1116px;top:548px;width:20px;height:1px;background:#d6d6d6"></div>
<div style="position:absolute;left:1185px;top:548px;width:122px;height:1px;background:#d6d6d6"></div>
<div class="t" style="left:1139.92px;top:543.23px;font-size:11.5px;color:#1b5ea8;font-weight:bold;transform:scaleX(1.0268);">Smileys</div>
<svg style="position:absolute;left:1312px;top:540px;" width="17" height="17" viewBox="0 0 17 17"><rect x="5.3" y="0.7" width="5.4" height="14.8" rx="1.2" fill="#fff" stroke="#333" stroke-width="1.3"/><rect x="0.8" y="3.8" width="7.4" height="3.2" rx="1.6" fill="#fff" stroke="#3a5f98" stroke-width="1.3"/><rect x="8.2" y="7.8" width="7.6" height="3.4" rx="1.7" fill="#d6ecb8" stroke="#6aa83a" stroke-width="1.3"/></svg>
<svg style="position:absolute;left:1100px;top:563px;" width="9" height="9" viewBox="0 0 9 9"><rect x="0.5" y="0.5" width="8" height="8" fill="#f7f7f7" stroke="#9c9c9c" stroke-width="1"/><path d="M2 4.5 H7" stroke="#333" stroke-width="1"/><path d="M4.5 2 V7" stroke="#333" stroke-width="1"/></svg>
<div style="position:absolute;left:1116px;top:566px;width:20px;height:1px;background:#d6d6d6"></div>
<div style="position:absolute;left:1240px;top:566px;width:67px;height:1px;background:#d6d6d6"></div>
<div class="t" style="left:1139.73px;top:561.23px;font-size:11.5px;color:#1b5ea8;font-weight:bold;transform:scaleX(1.0079);">Einzelne Symbole</div>
<svg style="position:absolute;left:1312px;top:558px;" width="17" height="17" viewBox="0 0 17 17"><rect x="5.3" y="0.7" width="5.4" height="14.8" rx="1.2" fill="#fff" stroke="#333" stroke-width="1.3"/><rect x="0.8" y="3.8" width="7.4" height="3.2" rx="1.6" fill="#fff" stroke="#3a5f98" stroke-width="1.3"/><rect x="8.2" y="7.8" width="7.6" height="3.4" rx="1.7" fill="#d6ecb8" stroke="#6aa83a" stroke-width="1.3"/></svg>
<div style="position:absolute;left:1116px;top:584px;width:20px;height:1px;background:#d6d6d6"></div>
<div style="position:absolute;left:1197px;top:584px;width:110px;height:1px;background:#d6d6d6"></div>
<div class="t" style="left:1139.72px;top:579.23px;font-size:11.5px;color:#1b5ea8;font-weight:bold;transform:scaleX(1.0193);">Füllfarben</div>
<svg style="position:absolute;left:1312px;top:576px;" width="17" height="17" viewBox="0 0 17 17"><path d="M8 9 L15 2" stroke="#333" stroke-width="3" stroke-linecap="round"/><path d="M5.5 9.5 C7.5 9.5 8 11.5 6.5 13.5 C5 15.5 1 16 0.5 15 C1.5 14 1.5 10 5.5 9.5 Z" fill="#2c55a0"/></svg>
<div style="position:absolute;left:1116px;top:602px;width:20px;height:1px;background:#d6d6d6"></div>
<div style="position:absolute;left:1215px;top:602px;width:92px;height:1px;background:#d6d6d6"></div>
<div class="t" style="left:1139.91px;top:597.23px;font-size:11.5px;color:#1b5ea8;font-weight:bold;transform:scaleX(1.0419);">Schriftfarben</div>
<svg style="position:absolute;left:1312px;top:594px;" width="17" height="17" viewBox="0 0 17 17"><path d="M8 9 L15 2" stroke="#333" stroke-width="3" stroke-linecap="round"/><path d="M5.5 9.5 C7.5 9.5 8 11.5 6.5 13.5 C5 15.5 1 16 0.5 15 C1.5 14 1.5 10 5.5 9.5 Z" fill="#2c55a0"/></svg>
<div style="position:absolute;left:1339px;top:160px;width:24px;height:540px;background:#e8e8e8"></div>
<div style="position:absolute;left:1339px;top:160px;width:1px;height:540px;background:#c6c6c6"></div>
<svg style="position:absolute;left:1339px;top:164px;" width="22" height="58" viewBox="0 0 22 58"><path d="M0.5 0 V58 H21.5 V7 L15 0.5 Z" fill="#ffffff" stroke="#b4b4b4" stroke-width="1"/></svg>
<svg style="position:absolute;left:1339px;top:222px;" width="22" height="96" viewBox="0 0 22 96"><path d="M0.5 0 V96 H21.5 V7 L15 0.5 Z" fill="#e0e0e0" stroke="#b4b4b4" stroke-width="1"/></svg>
<svg style="position:absolute;left:1339px;top:318px;" width="22" height="79" viewBox="0 0 22 79"><path d="M0.5 0 V79 H21.5 V7 L15 0.5 Z" fill="#e0e0e0" stroke="#b4b4b4" stroke-width="1"/></svg>
<svg style="position:absolute;left:1339px;top:397px;" width="22" height="83" viewBox="0 0 22 83"><path d="M0.5 0 V83 H21.5 V7 L15 0.5 Z" fill="#e0e0e0" stroke="#b4b4b4" stroke-width="1"/></svg>
<svg style="position:absolute;left:1339px;top:480px;" width="22" height="82" viewBox="0 0 22 82"><path d="M0.5 0 V82 H21.5 V7 L15 0.5 Z" fill="#e0e0e0" stroke="#b4b4b4" stroke-width="1"/></svg>
<svg style="position:absolute;left:1339px;top:562px;" width="22" height="54" viewBox="0 0 22 54"><path d="M0.5 0 V54 H21.5 V7 L15 0.5 Z" fill="#e0e0e0" stroke="#b4b4b4" stroke-width="1"/></svg>
<svg style="position:absolute;left:1339px;top:616px;" width="22" height="66" viewBox="0 0 22 66"><path d="M0.5 0 V66 H21.5 V7 L15 0.5 Z" fill="#e0e0e0" stroke="#b4b4b4" stroke-width="1"/></svg>
<div class="t" style="left:1353.8px;top:188.50px;font-size:12px;color:#222;font-weight:bold;transform:rotate(90deg) scaleX(0.8940);transform-origin:0 0">Index</div>
<div class="t" style="left:1353.8px;top:246.00px;font-size:11.5px;color:#444;font-weight:normal;transform:rotate(90deg) scaleX(0.9588);transform-origin:0 0">Aufgabeninfo</div>
<div class="t" style="left:1353.8px;top:342.50px;font-size:11.5px;color:#444;font-weight:normal;transform:rotate(90deg) scaleX(0.7824);transform-origin:0 0">Ressourcen</div>
<div class="t" style="left:1353.8px;top:426.00px;font-size:11.5px;color:#444;font-weight:normal;transform:rotate(90deg) scaleX(0.9736);transform-origin:0 0">Map Parts</div>
<div class="t" style="left:1353.8px;top:505.00px;font-size:11.5px;color:#444;font-weight:normal;transform:rotate(90deg) scaleX(0.8916);transform-origin:0 0">Bibliothek</div>
<div class="t" style="left:1353.8px;top:581.50px;font-size:11.5px;color:#444;font-weight:normal;transform:rotate(90deg) scaleX(0.9048);transform-origin:0 0">Suche</div>
<div class="t" style="left:1353.8px;top:637.00px;font-size:11.5px;color:#444;font-weight:normal;transform:rotate(90deg) scaleX(1.0070);transform-origin:0 0">Browser</div>
<svg style="position:absolute;left:1342px;top:166px;" width="16" height="17" viewBox="0 0 16 17"><rect x="5.5" y="1" width="5" height="15" rx="1" fill="#fff" stroke="#2c4a7a" stroke-width="1.3"/><rect x="1" y="4.5" width="7.5" height="3.2" rx="1.2" fill="#fff" stroke="#2c4a7a" stroke-width="1.2"/><rect x="8" y="9" width="7.5" height="3.5" rx="1.5" fill="#b8dd8e" stroke="#5a9a2a" stroke-width="1.2"/></svg>
<svg style="position:absolute;left:1342px;top:225px;" width="16" height="16" viewBox="0 0 16 16"><circle cx="7.5" cy="7.5" r="6.6" fill="none" stroke="#3c3c3c" stroke-width="1.3"/><path d="M7.5 3 V8 L4.5 10.5" stroke="#3c3c3c" stroke-width="1.2" fill="none"/><path d="M9 11.5 L11 13.5 L15 8.5" stroke="#4fa030" stroke-width="1.8" fill="none"/></svg>
<svg style="position:absolute;left:1342px;top:320px;" width="16" height="16" viewBox="0 0 16 16"><path d="M1.5 15 C1.5 10 4 10 6 9 C4 7 4 1 8 1 C12 1 12 7 10 9 C12 10 14.5 10 14.5 15 Z" fill="none" stroke="#3c3c3c" stroke-width="1.3"/></svg>
<svg style="position:absolute;left:1342px;top:401px;" width="17" height="17" viewBox="0 0 17 17"><rect x="3" y="0.6" width="13" height="12.5" fill="#fff" stroke="#3c3c3c" stroke-width="1.1"/><rect x="0.6" y="3" width="13" height="13.2" fill="#dde9f6" stroke="#3c3c3c" stroke-width="1.2"/><path d="M3.2 13.5 V6.2 H11 V13.5 M5.8 6.2 V11 M8.4 6.2 V11" stroke="#2c4a7a" stroke-width="1.1" fill="none"/></svg>
<svg style="position:absolute;left:1342px;top:483px;" width="16" height="16" viewBox="0 0 16 16"><rect x="0.5" y="0.5" width="9" height="10" fill="#dbe8f6" stroke="#2c4a7a" stroke-width="1"/><rect x="3.5" y="3" width="9" height="10" fill="#f6c9a6" stroke="#c46a2a" stroke-width="1"/><rect x="6" y="5.5" width="9" height="10" fill="#d9efc6" stroke="#5a9a2a" stroke-width="1"/></svg>
<svg style="position:absolute;left:1341px;top:561px;" width="19" height="18" viewBox="0 0 19 18"><g fill="#fff" stroke="#3c3c3c" stroke-width="1.2"><rect x="2.5" y="1.3" width="4.8" height="2.6" rx="0.8"/><rect x="11.7" y="1.3" width="4.8" height="2.6" rx="0.8"/><rect x="1.8" y="3.9" width="6.2" height="9.6"/><rect x="11" y="3.9" width="6.2" height="9.6"/><rect x="1.2" y="13.5" width="7.4" height="3" rx="0.8"/><rect x="10.4" y="13.5" width="7.4" height="3" rx="0.8"/><rect x="3.8" y="6.6" width="11.4" height="3.2" rx="0.8"/></g></svg>
<svg style="position:absolute;left:1343px;top:619px;" width="15" height="15" viewBox="0 0 15 15"><circle cx="7" cy="6" r="5.2" fill="#fff" stroke="#3c3c3c" stroke-width="1.4"/><path d="M5 4.5 A2.5 2.5 0 0 1 8 3.5" stroke="#3c3c3c" stroke-width="1" fill="none"/><path d="M3.5 13 H10.5" stroke="#3c3c3c" stroke-width="2.2"/><path d="M7 11 V12" stroke="#3c3c3c" stroke-width="1.4"/></svg>
<div style="position:absolute;left:0px;top:677px;width:1081px;height:24px;background:#e6e6e6"></div>
<div style="position:absolute;left:1081px;top:677px;width:8px;height:24px;background:#e2e2e2"></div>
<div style="position:absolute;left:0px;top:677px;width:1079px;height:1px;background:#c8c8c8"></div>
<svg style="position:absolute;left:1px;top:683px;" width="6" height="10" viewBox="0 0 6 10"><path d="M5.5 1 L1 5 L5.5 9 Z" fill="none" stroke="#999" stroke-width="1"/></svg>
<svg style="position:absolute;left:1064px;top:684px;" width="6" height="10" viewBox="0 0 6 10"><path d="M0.5 1 L5 5 L0.5 9 Z" fill="none" stroke="#999" stroke-width="1"/></svg>
<svg style="position:absolute;left:0px;top:677px;" width="300" height="24" viewBox="0 0 300 24"><path d="M13 1 L37 22.5 H120 L104 1 Z" fill="#f2f2f2" stroke="#b0b0b0" stroke-width="1"/><path d="M104 1 L121 22.5 H268.5 V1 Z" fill="#ffffff" stroke="#b0b0b0" stroke-width="1"/></svg>
<svg style="position:absolute;left:42px;top:679px;" width="14" height="16" viewBox="0 0 14 16"><path d="M0.5 0.5 H9 L13.5 5 V15.5 H0.5 Z" fill="#3b5c9c"/><path d="M3 5 H6 V13 H3 Z M7.5 7 H11 V13 H7.5 Z" fill="#dfe8f5"/></svg>
<div class="t" style="left:65.33px;top:682.00px;font-size:12px;color:#333;font-weight:normal;transform:scaleX(1.0081);">Studium*</div>
<svg style="position:absolute;left:133px;top:679px;" width="14" height="16" viewBox="0 0 14 16"><path d="M0.5 0.5 H9 L13.5 5 V15.5 H0.5 Z" fill="#3b5c9c"/><path d="M3 5 H6 V13 H3 Z M7.5 7 H11 V13 H7.5 Z" fill="#dfe8f5"/></svg>
<div class="t" style="left:159.30px;top:682.00px;font-size:12px;color:#2b5a9a;font-weight:bold;transform:scaleX(0.8994);">To-Do-Liste*</div>
<svg style="position:absolute;left:236px;top:685px;" width="8" height="8" viewBox="0 0 8 8"><path d="M0.5 0.5 H7.5 M0.5 0.5 V7.5" stroke="#777" stroke-width="1"/><path d="M2.5 2.5 L7 7 M4 7 H7 V4" stroke="#777" stroke-width="1.1" fill="none"/></svg>
<svg style="position:absolute;left:254px;top:684px;" width="9" height="9" viewBox="0 0 9 9"><path d="M1 1 L8 8 M8 1 L1 8" stroke="#555" stroke-width="1.4"/></svg>
<div style="position:absolute;left:0px;top:701px;width:1363px;height:24px;background:#f0f0f0"></div>
<svg style="position:absolute;left:0px;top:705px;" width="16" height="15" viewBox="0 0 16 15"><rect x="0.5" y="0.5" width="12" height="9" fill="#fff" stroke="#7a9cc8" stroke-width="1"/><path d="M2 3 H10 M2 5 H8" stroke="#7a9cc8" stroke-width="1"/><rect x="4" y="7" width="11" height="7.5" fill="#fde6d6" stroke="#c9846a" stroke-width="1"/><circle cx="8.5" cy="11" r="2.3" fill="#e0603a"/></svg>
<div class="t" style="left:22.81px;top:706.95px;font-size:13px;color:#16168f;font-weight:bold;transform:scaleX(1.1011);">Noch 15 Testtage verbleiben - Jetzt kaufen</div>
<div style="position:absolute;left:23px;top:719.5px;width:287px;height:1.2px;background:#16168f"></div>
<svg style="position:absolute;left:869px;top:706px;" width="18" height="15" viewBox="0 0 18 15"><rect x="1" y="1" width="15.5" height="13" fill="none" stroke="#555" stroke-width="1.1"/><path d="M1 3.8 H16.5 M4.8 3.8 V14" stroke="#555" stroke-width="1"/><path d="M2.3 6.5 H3.8 M2.3 9 H3.8 M2.3 11.5 H3.8 M6.5 6.5 H10 M7.5 9 H14 M7.5 11.5 H14" stroke="#555" stroke-width="1.1"/></svg>
<svg style="position:absolute;left:901px;top:706px;" width="16" height="15" viewBox="0 0 16 15"><path d="M0.5 0.5 H15.5 L9.5 7 V14.5 L6.5 12.5 V7 Z" fill="#555"/></svg>
<svg style="position:absolute;left:919px;top:712px;" width="5" height="3" viewBox="0 0 5 3"><path d="M0 0 H5 L2.5 3 Z" fill="#555"/></svg>
<svg style="position:absolute;left:931px;top:706px;" width="17" height="16" viewBox="0 0 17 16"><path d="M0.5 0.5 H15.5 L9.5 7 V14.5 L6.5 14.5 V7 Z" fill="#555"/><path d="M11.5 7.5 L15 10 L12.5 11.5 L15.5 15.5 L10.5 12.5 L12.8 11 Z" fill="#555" stroke="#f0f0f0" stroke-width="0.8"/></svg>
<svg style="position:absolute;left:950px;top:712px;" width="5" height="3" viewBox="0 0 5 3"><path d="M0 0 H5 L2.5 3 Z" fill="#555"/></svg>
<svg style="position:absolute;left:970px;top:706px;" width="16" height="16" viewBox="0 0 16 16"><circle cx="8" cy="8" r="6.5" fill="none" stroke="#555" stroke-width="1.4"/><path d="M8 4.5 V11.5 M4.5 8 H11.5" stroke="#555" stroke-width="1.6"/><path d="M1 3 L3 1" stroke="#555" stroke-width="1.4"/></svg>
<svg style="position:absolute;left:989px;top:712px;" width="5" height="3" viewBox="0 0 5 3"><path d="M0 0 H5 L2.5 3 Z" fill="#555"/></svg>
<div style="position:absolute;left:999px;top:703px;width:22px;height:20px;background:#c9c9c9"></div>
<svg style="position:absolute;left:1002px;top:706px;" width="16" height="15" viewBox="0 0 16 15"><rect x="0.5" y="0.5" width="15" height="14" fill="none" stroke="#555" stroke-width="1"/><circle cx="4.5" cy="4" r="1.5" fill="#555"/><circle cx="11.5" cy="4" r="1.5" fill="#555"/><circle cx="8" cy="7.5" r="1.5" fill="#555"/><circle cx="4.5" cy="11" r="1.5" fill="#555"/><circle cx="11.5" cy="11" r="1.5" fill="#555"/></svg>
<svg style="position:absolute;left:1025px;top:706px;" width="15" height="15" viewBox="0 0 15 15"><rect x="0.5" y="0.5" width="14" height="14" fill="none" stroke="#555" stroke-width="1"/><path d="M3 4 H11 M3 6.5 H9 M3 9 H11 M3 11.5 H8" stroke="#555" stroke-width="1"/></svg>
<svg style="position:absolute;left:1048px;top:705px;" width="16" height="16" viewBox="0 0 16 16"><rect x="0.5" y="0.5" width="15" height="15" fill="none" stroke="#555" stroke-width="1"/><rect x="0.5" y="0.5" width="15" height="4" fill="#555"/><text x="8" y="13.5" font-size="7.5" font-weight="bold" text-anchor="middle" fill="#555" font-family="Liberation Sans">24</text></svg>
<svg style="position:absolute;left:1072px;top:705px;" width="16" height="16" viewBox="0 0 16 16"><rect x="0.5" y="0.5" width="15" height="15" rx="3" fill="none" stroke="#555" stroke-width="1.2"/><circle cx="6.5" cy="6.5" r="3.5" fill="none" stroke="#555" stroke-width="1.8"/><circle cx="9.5" cy="9.5" r="3.5" fill="none" stroke="#555" stroke-width="1.8"/></svg>
<svg style="position:absolute;left:1096px;top:705px;" width="16" height="16" viewBox="0 0 16 16"><rect x="0.5" y="0.5" width="15" height="15" rx="3" fill="none" stroke="#555" stroke-width="1.2"/><path d="M12.5 3 L13 7 L7 13 L3 9 L9 3 Z" fill="none" stroke="#555" stroke-width="1.4"/></svg>
<div class="t" style="left:1126.80px;top:708.23px;font-size:11.5px;color:#444;font-weight:normal;transform:scaleX(0.9175);">100 %</div>
<div style="position:absolute;left:1173px;top:713px;width:8px;height:1.5px;background:#aaa"></div>
<div style="position:absolute;left:1191px;top:713px;width:86px;height:1px;background:#bbb"></div>
<div style="position:absolute;left:1233px;top:706px;width:4px;height:13px;background:#f4f4f4;border:1px solid #aaa"></div>
<svg style="position:absolute;left:1288px;top:709px;" width="9" height="9" viewBox="0 0 9 9"><path d="M4.5 0.5 V8.5 M0.5 4.5 H8.5" stroke="#aaa" stroke-width="1.5"/></svg>
<svg style="position:absolute;left:1306px;top:708px;" width="14" height="13" viewBox="0 0 14 13"><rect x="0.5" y="0.5" width="13" height="12" fill="none" stroke="#555" stroke-width="1"/><path d="M7 3 V10 M3.5 6.5 H10.5" stroke="#555" stroke-width="0.8" stroke-dasharray="1 1"/></svg>
<svg style="position:absolute;left:1336px;top:706px;" width="15" height="15" viewBox="0 0 15 15"><rect x="0" y="0.5" width="8" height="14" fill="#555"/><rect x="8" y="0.5" width="6" height="3" fill="#555"/><rect x="11" y="0.5" width="3" height="14" fill="#555"/></svg>
<svg style="position:absolute;left:1354px;top:711px;" width="6" height="3" viewBox="0 0 6 3"><path d="M0 0 H6 L3 3 Z" fill="#555"/></svg>
</body></html>
